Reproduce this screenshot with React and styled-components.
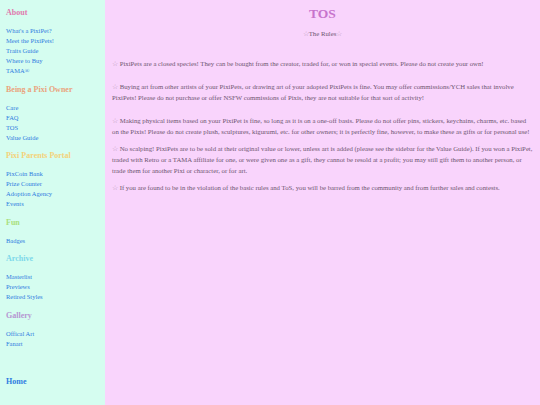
import React from 'react';
import styled, { createGlobalStyle } from 'styled-components';

const Global = createGlobalStyle`
  html, body { margin: 0; padding: 0; }
  body {
    font-family: "Liberation Serif", "Times New Roman", serif;
    background: #f9d4fc;
  }
`;

const Page = styled.div`
  display: flex;
  width: 540px;
  min-height: 405px;
`;

const Sidebar = styled.nav`
  width: 105px;
  flex-shrink: 0;
  background: #d5fdf0;
  padding: 8px 6px;
  box-sizing: border-box;
  display: flex;
  flex-direction: column;
  gap: 8.5px;
`;

const Group = styled.div`
  display: flex;
  flex-direction: column;
`;

const Heading = styled.div`
  font-size: 8px;
  font-weight: bold;
  line-height: 10px;
  color: ${p => p.color};
  margin-bottom: 8px;
`;

const NavLink = styled.a`
  font-size: 6.5px;
  line-height: 10px;
  color: #2f7ce0;
  text-decoration: none;
  white-space: nowrap;
`;

const HomeLink = styled.a`
  margin-top: 20px;
  font-size: 8px;
  font-weight: bold;
  line-height: 10px;
  color: #2f7ce0;
  text-decoration: none;
`;

const Main = styled.main`
  flex: 1;
  background: #f9d4fc;
  padding: 6px 7px 0 7px;
  color: #6e5670;
  font-size: 6.75px;
`;

const Title = styled.h1`
  margin: 0;
  text-align: center;
  font-size: 13.5px;
  line-height: 16px;
  font-weight: bold;
  color: #c773cc;
`;

const Sub = styled.div`
  text-align: center;
  line-height: 11px;
  margin-top: 6px;
  margin-bottom: 19px;
`;

const Rule = styled.p`
  margin: 0 0 ${p => p.$gap}px 0;
  line-height: 11px;
`;

const Star = styled.span`
  color: #b595b5;
`;

const nav = [
  { title: 'About', color: '#e07aae', links: ["What's a PixiPet?", 'Meet the PixiPets!', 'Traits Guide', 'Where to Buy', 'TAMA®'] },
  { title: 'Being a Pixi Owner', color: '#eaa37c', links: ['Care', 'FAQ', 'TOS', 'Value Guide'] },
  { title: 'Pixi Parents Portal', color: '#f4d27a', links: ['PixCoin Bank', 'Prize Counter', 'Adoption Agency', 'Events'] },
  { title: 'Fun', color: '#a9e07c', links: ['Badges'] },
  { title: 'Archive', color: '#7cd8ea', links: ['Masterlist', 'Previews', 'Retired Styles'] },
  { title: 'Gallery', color: '#b596d2', links: ['Offical Art', 'Fanart'] },
];

const rules = [
  { gap: 12, text: 'PixiPets are a closed species! They can be bought from the creator, traded for, or won in special events. Please do not create your own!' },
  { gap: 12, text: 'Buying art from other artists of your PixiPets, or drawing art of your adopted PixiPets is fine. You may offer commissions/YCH sales that involve PixiPets! Please do not purchase or offer NSFW commissions of Pixis, they are not suitable for that sort of activity!' },
  { gap: 6, text: 'Making physical items based on your PixiPet is fine, so long as it is on a one-off basis. Please do not offer pins, stickers, keychains, charms, etc. based on the Pixis! Please do not create plush, sculptures, kigurumi, etc. for other owners; it is perfectly fine, however, to make these as gifts or for personal use!' },
  { gap: 6, text: 'No scalping! PixiPets are to be sold at their original value or lower, unless art is added (please see the sidebar for the Value Guide). If you won a PixiPet, traded with Retro or a TAMA affiliate for one, or were given one as a gift, they cannot be resold at a profit; you may still gift them to another person, or trade them for another Pixi or character, or for art.' },
  { gap: 0, text: 'If you are found to be in the violation of the basic rules and ToS, you will be barred from the community and from further sales and contests.' },
];

export default function App() {
  return (
    <>
      <Global />
      <Page>
        <Sidebar>
          {nav.map(g => (
            <Group key={g.title}>
              <Heading color={g.color}>{g.title}</Heading>
              {g.links.map(l => <NavLink key={l} href="#">{l}</NavLink>)}
            </Group>
          ))}
          <HomeLink href="#">Home</HomeLink>
        </Sidebar>
        <Main>
          <Title>TOS</Title>
          <Sub><Star>☆</Star>The Rules<Star>☆</Star></Sub>
          {rules.map((r, i) => (
            <Rule key={i} $gap={r.gap}><Star>☆</Star> {r.text}</Rule>
          ))}
        </Main>
      </Page>
    </>
  );
}
